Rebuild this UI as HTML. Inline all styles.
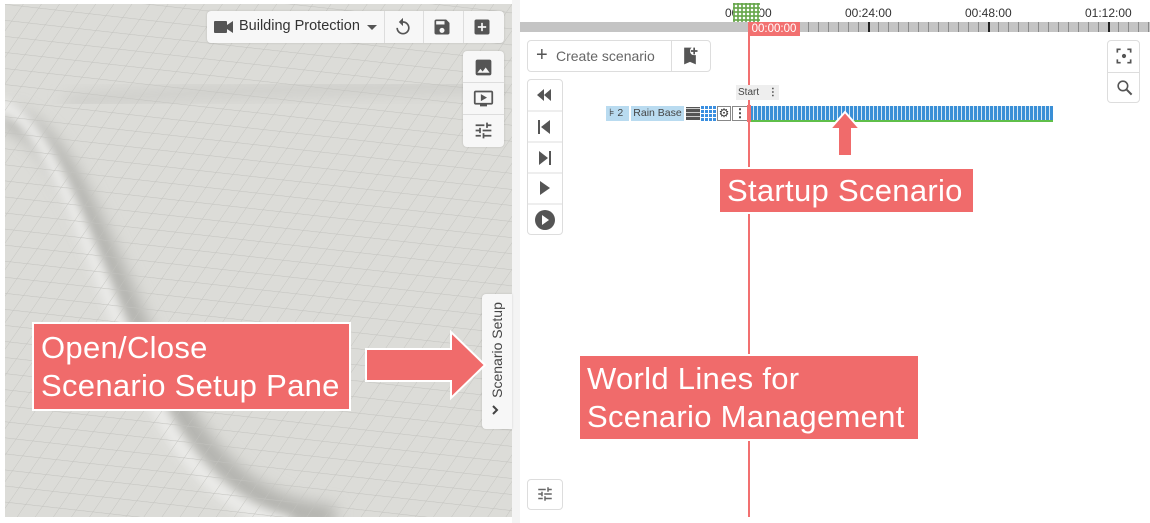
<!DOCTYPE html>
<html><head><meta charset="utf-8"><style>
*{margin:0;padding:0;box-sizing:border-box}
body{width:1150px;height:523px;background:#fff;position:relative;overflow:hidden;font-family:"Liberation Sans",sans-serif}
.abs{position:absolute}
.btn{position:absolute;background:#fff;border:1px solid #ddd;border-radius:4px}
.ann{position:absolute;background:#f06b6b;border:2px solid #fff;color:#fff;font-size:31px;line-height:38px;padding-left:7px;letter-spacing:.3px}
</style></head><body>
<div class="abs" style="left:5px;top:4px;width:507px;height:513px;background:#dadad6;overflow:hidden">
<svg width="507" height="513" style="position:absolute;left:0;top:0">
<defs>
<pattern id="g" width="18" height="15" patternUnits="userSpaceOnUse" patternTransform="skewX(-30) rotate(6)">
<path d="M0 0H18M0 0V15" stroke="#c3c3bf" stroke-width="1" fill="none"/></pattern>
<filter id="b"><feGaussianBlur stdDeviation="8"/></filter>
<filter id="b2"><feGaussianBlur stdDeviation="5"/></filter>
</defs>
<rect width="507" height="513" fill="#dcdcd8"/>
<path d="M0 115 C60 120 100 260 165 390 C215 480 270 510 330 513" stroke="#b0b0ac" stroke-width="22" fill="none" filter="url(#b)"/>
<path d="M-10 100 C40 105 75 230 135 370 C175 460 225 510 285 520" stroke="#ececea" stroke-width="14" fill="none" filter="url(#b2)"/>
<path d="M60 98 C150 88 300 85 500 82" stroke="#c8c8c4" stroke-width="10" fill="none" filter="url(#b)"/>
<rect width="507" height="513" fill="url(#g)"/>
</svg>
</div>
<div class="abs" style="left:512px;top:0;width:8px;height:523px;background:#f4f4f4"></div>
<div class="abs" style="left:207px;top:11px;width:297px;height:32px;background:#f7f7f7;border-radius:4px;box-shadow:0 0 2px rgba(0,0,0,.15)">
<svg class="abs" style="left:7px;top:9px" width="20" height="14"><rect x="0" y="1" width="13" height="12" rx="1" fill="#555"/><path d="M13 5L19 1V13L13 9Z" fill="#555"/></svg>
<div class="abs" style="left:32px;top:7px;font-size:14.5px;color:#333">Building Protection</div>
<div class="abs" style="left:160px;top:14px;border-left:5px solid transparent;border-right:5px solid transparent;border-top:5px solid #555"></div>
<div class="abs" style="left:177px;top:0;width:1px;height:32px;background:#ddd"></div>
<svg class="abs" style="left:186px;top:6px" width="20" height="20" viewBox="0 0 24 24"><path d="M12 5V1L7 6l5 5V7c3.3 0 6 2.7 6 6s-2.7 6-6 6-6-2.7-6-6H4c0 4.4 3.6 8 8 8s8-3.6 8-8-3.6-8-8-8z" fill="#555"/></svg>
<div class="abs" style="left:216px;top:0;width:1px;height:32px;background:#ddd"></div>
<svg class="abs" style="left:225px;top:6px" width="20" height="20" viewBox="0 0 24 24"><path d="M17 3H5c-1.1 0-2 .9-2 2v14c0 1.1.9 2 2 2h14c1.1 0 2-.9 2-2V7l-4-4zm-5 16c-1.7 0-3-1.3-3-3s1.3-3 3-3 3 1.3 3 3-1.3 3-3 3zm3-10H5V5h10v4z" fill="#555"/></svg>
<div class="abs" style="left:256px;top:0;width:1px;height:32px;background:#ddd"></div>
<svg class="abs" style="left:265px;top:6px" width="20" height="20" viewBox="0 0 24 24"><path d="M19 3H5c-1.1 0-2 .9-2 2v14c0 1.1.9 2 2 2h14c1.1 0 2-.9 2-2V5c0-1.1-.9-2-2-2zm-2 10h-4v4h-2v-4H7v-2h4V7h2v4h4v2z" fill="#555"/></svg>
</div>
<div class="abs" style="left:463px;top:51px;width:41px;height:96px;background:#f7f7f7;border-radius:4px;box-shadow:0 0 2px rgba(0,0,0,.15)">
<svg class="abs" style="left:10px;top:6px" width="21" height="21" viewBox="0 0 24 24"><path d="M21 19V5c0-1.1-.9-2-2-2H5c-1.1 0-2 .9-2 2v14c0 1.1.9 2 2 2h14c1.1 0 2-.9 2-2zM8.5 13.5l2.5 3 3.5-4.5 4.5 6H5l3.5-4.5z" fill="#555"/></svg>
<div class="abs" style="left:0;top:31px;width:41px;height:1px;background:#ddd"></div>
<svg class="abs" style="left:10px;top:37px" width="21" height="21" viewBox="0 0 24 24"><path d="M21 3H3c-1.1 0-2 .9-2 2v12c0 1.1.9 2 2 2h5v2h8v-2h5c1.1 0 2-.9 2-2V5c0-1.1-.9-2-2-2zm0 14H3V5h18v12zm-5-6l-7 4V7z" fill="#555"/></svg>
<div class="abs" style="left:0;top:63px;width:41px;height:1px;background:#ddd"></div>
<svg class="abs" style="left:10px;top:69px" width="21" height="21" viewBox="0 0 24 24"><path d="M3 17v2h6v-2H3zM3 5v2h10V5H3zm10 16v-2h8v-2h-8v-2h-2v6h2zM7 9v2H3v2h4v2h2V9H7zm14 4v-2H11v2h10zm-6-4h2V7h4V5h-4V3h-2v6z" fill="#555"/></svg>
</div>
<div class="abs" style="left:482px;top:294px;width:30px;height:135px;background:#f7f7f7;border-radius:4px 0 0 4px;box-shadow:0 0 2px rgba(0,0,0,.15)">
<div class="abs" style="left:-45px;top:47px;width:120px;height:18px;line-height:18px;transform:rotate(-90deg);font-size:14px;color:#444;text-align:center;white-space:nowrap">Scenario Setup</div>
<svg class="abs" style="left:9px;top:111px" width="10" height="10"><path d="M2 1l4 4-4 4" stroke="#444" stroke-width="2" fill="none"/></svg>
</div>
<div class="abs" style="left:520px;top:22px;width:630px;height:10px;background:#c4c4c4;background-image:repeating-linear-gradient(90deg,transparent 0,transparent 9px,#8a8a8a 9px,#8a8a8a 10px);background-position:789px 0"></div>
<div class="abs" style="left:520px;top:22px;width:280px;height:10px;background:#c4c4c4"></div>
<div class="abs" style="left:868px;top:22px;width:2px;height:10px;background:#222"></div>
<div class="abs" style="left:988px;top:22px;width:2px;height:10px;background:#222"></div>
<div class="abs" style="left:1108px;top:22px;width:2px;height:10px;background:#222"></div>
<div class="abs" style="left:725px;top:6px;font-size:12px;color:#333">00:00:00</div>
<div class="abs" style="left:845px;top:6px;font-size:12px;color:#333">00:24:00</div>
<div class="abs" style="left:965px;top:6px;font-size:12px;color:#333">00:48:00</div>
<div class="abs" style="left:1085px;top:6px;font-size:12px;color:#333">01:12:00</div>
<div class="abs" style="left:733px;top:3px;width:27px;height:19px;background:#6aa84f;background-image:radial-gradient(#fff 1.2px,transparent 1.4px);background-size:4px 4px;background-position:1px 1px"></div>
<div class="abs" style="left:748px;top:22px;width:52px;height:14px;background:#f27070;color:#fff;font-size:11.5px;line-height:14px;text-align:center">00:00:00</div>
<div class="abs" style="left:748px;top:22px;width:2px;height:495px;background:#f27070"></div>
<div class="btn" style="left:527px;top:40px;width:184px;height:32px">
<div class="abs" style="left:8px;top:3px;font-size:20px;color:#555">+</div>
<div class="abs" style="left:28px;top:7px;font-size:14px;color:#666">Create scenario</div>
<div class="abs" style="left:143px;top:0;width:1px;height:30px;background:#ddd"></div>
<svg class="abs" style="left:152px;top:5px" width="20" height="20" viewBox="0 0 24 24"><path d="M14 2H5v20l7-3 7 3v-11h-2V11a5 5 0 0 1-3-9z" fill="#555"/><path d="M18 2v3h3v2h-3v3h-2V7h-3V5h3V2z" fill="#555"/></svg>
</div>
<div class="btn" style="left:1107px;top:40px;width:33px;height:63px">
<svg class="abs" style="left:6px;top:5px" width="20" height="20" viewBox="0 0 24 24"><path d="M4 8V4h4M16 4h4v4M20 16v4h-4M8 20H4v-4" stroke="#555" stroke-width="2" fill="none"/><circle cx="12" cy="12" r="2.5" fill="#555"/></svg>
<div class="abs" style="left:0;top:31px;width:31px;height:1px;background:#ddd"></div>
<svg class="abs" style="left:7px;top:37px" width="19" height="19" viewBox="0 0 24 24"><circle cx="10" cy="10" r="6" stroke="#555" stroke-width="2" fill="none"/><path d="M14.5 14.5L21 21" stroke="#555" stroke-width="2.5"/></svg>
</div>
<div class="btn" style="left:527px;top:79px;width:36px;height:156px">
<svg class="abs" style="left:0;top:0" width="34" height="156">
<path d="M9 15l7-6v12zM16 15l7-6v12z" fill="#555"/>
<line x1="0" y1="31" x2="34" y2="31" stroke="#ddd"/>
<path d="M11 40v14" stroke="#555" stroke-width="2"/><path d="M13 47l9-7v14z" fill="#555"/>
<line x1="0" y1="62" x2="34" y2="62" stroke="#ddd"/>
<path d="M11 71l9 7-9 7z" fill="#555"/><path d="M22 71v14" stroke="#555" stroke-width="2"/>
<line x1="0" y1="93" x2="34" y2="93" stroke="#ddd"/>
<path d="M12 101l10 7-10 7z" fill="#555"/>
<line x1="0" y1="124" x2="34" y2="124" stroke="#ddd"/>
<circle cx="17" cy="140" r="10" fill="#555"/><path d="M14 135l7 5-7 5z" fill="#fff"/>
</svg>
</div>
<div class="btn" style="left:527px;top:479px;width:36px;height:31px">
<svg class="abs" style="left:8px;top:5px" width="18" height="18" viewBox="0 0 24 24"><path d="M3 17v2h6v-2H3zM3 5v2h10V5H3zm10 16v-2h8v-2h-8v-2h-2v6h2zM7 9v2H3v2h4v2h2V9H7zm14 4v-2H11v2h10zm-6-4h2V7h4V5h-4V3h-2v6z" fill="#666"/></svg>
</div>
<div class="abs" style="left:736px;top:85px;width:43px;height:15px;background:#eee;font-size:10px;color:#444;line-height:15px;padding-left:2px">Start <b style="margin-left:6px">⋮</b></div>
<div class="abs" style="left:606px;top:106px;width:23px;height:15px;background:#b9dbf0;font-size:10.5px;color:#444;line-height:15px;padding-left:3px">⊧ 2</div>
<div class="abs" style="left:631px;top:106px;width:53px;height:15px;background:#b9dbf0;font-size:10.5px;color:#444;line-height:15px;text-align:center">Rain Base</div>
<div class="abs" style="left:686px;top:107px;width:14px;height:13px;background:#555;background-image:repeating-linear-gradient(0deg,transparent 0 3px,#ccc 3px 4px)"></div>
<div class="abs" style="left:701px;top:106px;width:16px;height:15px;background:#3a8fe0;background-image:repeating-linear-gradient(0deg,transparent 0 3px,#fff 3px 4px),repeating-linear-gradient(90deg,transparent 0 3px,#fff 3px 4px)"></div>
<div class="abs" style="left:717px;top:106px;width:14px;height:15px;background:#fff;border:1px solid #888;font-size:12px;line-height:13px;text-align:center;color:#333">⚙</div>
<div class="abs" style="left:732px;top:106px;width:16px;height:15px;background:#fff;border:1px solid #888;font-size:12px;line-height:13px;text-align:center;color:#333;font-weight:bold">⋮</div>
<div class="abs" style="left:750px;top:106px;width:303px;height:14px;background:#3a8fd6;background-image:repeating-linear-gradient(90deg,transparent 0 3px,#d6e8f5 3px 4px)"></div>
<div class="abs" style="left:750px;top:120px;width:303px;height:2px;background:#5fbf4a"></div>
<div class="abs" style="left:747px;top:105px;width:4px;height:17px;border:1px solid #f27070"></div>
<svg class="abs" style="left:828px;top:110px" width="34" height="47"><path d="M17 2L32 19H24V46H10V19H2Z" fill="#f06b6b" stroke="#fff" stroke-width="2"/></svg>
<div class="ann" style="left:718px;top:167px;width:257px;height:47px;padding-top:3px">Startup Scenario</div>
<div class="ann" style="left:32px;top:322px;width:319px;height:89px;padding-top:5px">Open/Close<br>Scenario Setup Pane</div>
<svg class="abs" style="left:362px;top:329px" width="126" height="72"><path d="M4 20H89V3L123 36L89 69V52H4Z" fill="#f06b6b" stroke="#fff" stroke-width="2"/></svg>
<div class="ann" style="left:578px;top:354px;width:342px;height:87px;padding-top:4px">World Lines for<br>Scenario Management</div>
</body></html>
